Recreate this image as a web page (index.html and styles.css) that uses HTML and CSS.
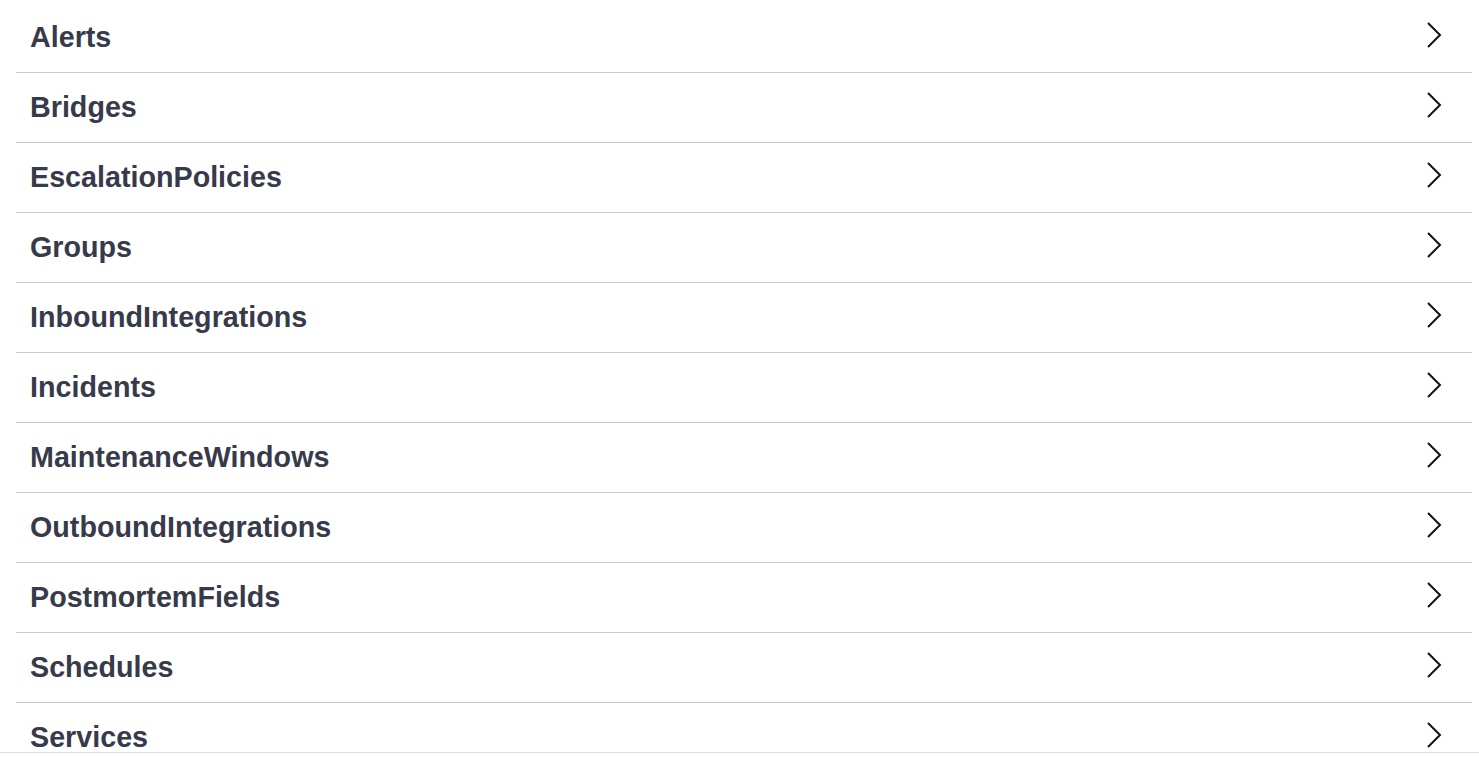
FILE: index.html
```html
<!DOCTYPE html>
<html lang="en">
<head>
  <meta charset="UTF-8" />
  <meta name="viewport" content="width=device-width, initial-scale=1.0" />
  <title>Resources</title>
  <link rel="stylesheet" href="styles.css">
</head>
<body>
  <main class="panel">
    <ul class="resource-list">
      <li class="resource"><span>Alerts</span><svg class="chevron" viewBox="0 0 16 28"><path d="M2 2 L14 14 L2 26"/></svg></li>
      <li class="resource"><span>Bridges</span><svg class="chevron" viewBox="0 0 16 28"><path d="M2 2 L14 14 L2 26"/></svg></li>
      <li class="resource"><span>EscalationPolicies</span><svg class="chevron" viewBox="0 0 16 28"><path d="M2 2 L14 14 L2 26"/></svg></li>
      <li class="resource"><span>Groups</span><svg class="chevron" viewBox="0 0 16 28"><path d="M2 2 L14 14 L2 26"/></svg></li>
      <li class="resource"><span>InboundIntegrations</span><svg class="chevron" viewBox="0 0 16 28"><path d="M2 2 L14 14 L2 26"/></svg></li>
      <li class="resource"><span>Incidents</span><svg class="chevron" viewBox="0 0 16 28"><path d="M2 2 L14 14 L2 26"/></svg></li>
      <li class="resource"><span>MaintenanceWindows</span><svg class="chevron" viewBox="0 0 16 28"><path d="M2 2 L14 14 L2 26"/></svg></li>
      <li class="resource"><span>OutboundIntegrations</span><svg class="chevron" viewBox="0 0 16 28"><path d="M2 2 L14 14 L2 26"/></svg></li>
      <li class="resource"><span>PostmortemFields</span><svg class="chevron" viewBox="0 0 16 28"><path d="M2 2 L14 14 L2 26"/></svg></li>
      <li class="resource"><span>Schedules</span><svg class="chevron" viewBox="0 0 16 28"><path d="M2 2 L14 14 L2 26"/></svg></li>
      <li class="resource"><span>Services</span><svg class="chevron" viewBox="0 0 16 28"><path d="M2 2 L14 14 L2 26"/></svg></li>
    </ul>
  </main>
</body>
</html>
```

FILE: styles.css
```css
html, body {
  margin: 0;
  height: 100%;
  background: #fff;
}
body {
  font-family: "Liberation Sans", Arial, sans-serif;
  color: #373a4a;
  display: flex;
  flex-direction: column;
  overflow: hidden;
}
.panel {
  height: 752px;
  flex: none;
  overflow: hidden;
  border-bottom: 1px solid #dcdcdc;
}
.resource-list {
  list-style: none;
  margin: 0;
  padding: 3px 7px 0 16px;
}
.resource {
  display: flex;
  align-items: center;
  justify-content: space-between;
  box-sizing: border-box;
  height: 70px;
  padding: 0 30px 0 14px;
  border-bottom: 1px solid #c8c8c8;
  font-size: 28.7px;
  font-weight: bold;
}
.chevron {
  width: 16px;
  height: 28px;
  margin-bottom: 5px;
  fill: none;
  stroke: #111;
  stroke-width: 2;
}
```
